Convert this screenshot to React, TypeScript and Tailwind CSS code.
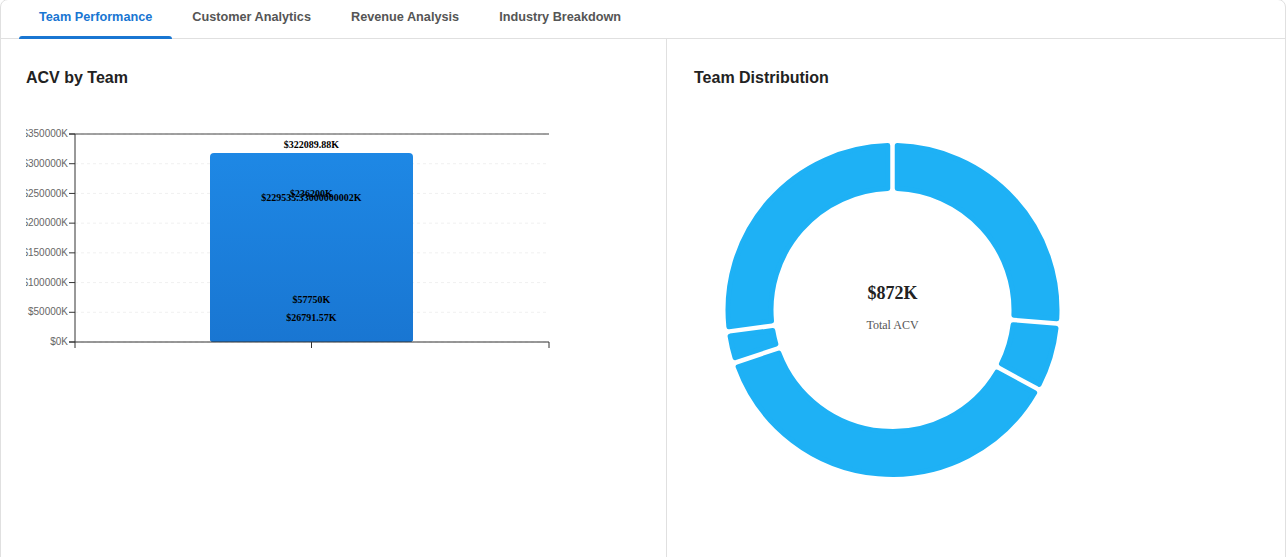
import { useState } from "react";

const teams = [
  { label: "$229535.33000000002K", value: 229535.33 },
  { label: "$57750K", value: 57750 },
  { label: "$322089.88K", value: 322089.88 },
  { label: "$26791.57K", value: 26791.57 },
  { label: "$236200K", value: 236200 },
];

const tabs = ["Team Performance", "Customer Analytics", "Revenue Analysis", "Industry Breakdown"];

// bar chart geometry (svg sits at x=25 inside the left panel)
const X0 = 49;
const X1 = 523;
const Y0 = 24;
const Y1 = 232;
const MAX = 350000;
const yOf = (v: number) => Y1 - (v / MAX) * (Y1 - Y0);
const ticks = [0, 50000, 100000, 150000, 200000, 250000, 300000, 350000];

function BarChart() {
  const sorted = [...teams].sort((a, b) => b.value - a.value);
  return (
    <svg width="560" height="260" className="block overflow-hidden">
      <defs>
        <linearGradient id="barFill" gradientUnits="userSpaceOnUse" x1="0" y1={Y0 + 18} x2="0" y2={Y1}>
          <stop offset="0%" stopColor="#1e88e5" />
          <stop offset="100%" stopColor="#1976d2" />
        </linearGradient>
      </defs>
      {ticks.map((t) => (
        <line key={t} x1={X0} x2={X1} y1={yOf(t)} y2={yOf(t)} stroke="#f0f0f0" strokeDasharray="3 3" />
      ))}
      <line x1={X0} x2={X1} y1={Y0} y2={Y0} stroke="#444" />
      {sorted.map((d, i) => {
        const top = i === 0 ? yOf(d.value) + 2.5 : yOf(d.value);
        return <rect key={d.label} x={184} y={top} width={203} height={Y1 - top} rx={4} fill="url(#barFill)" />;
      })}
      {sorted.map((d, i) => (
        <text
          key={d.label}
          x={285.5}
          y={yOf(d.value) - 5 + (i === 0 ? 2.5 : 0)}
          textAnchor="middle"
          fontFamily="'Liberation Serif', serif"
          fontWeight="bold"
          fontSize="10"
          fill="#000"
        >
          {d.label}
        </text>
      ))}
      {/* y axis */}
      <path d={`M${X0 - 6},${Y0}H${X0}V${Y1}H${X0 - 6}`} fill="none" stroke="#333" />
      {ticks.map((t) => (
        <g key={t}>
          <line x1={X0 - 6} x2={X0} y1={yOf(t)} y2={yOf(t)} stroke="#333" />
          <text
            x={X0 - 7}
            y={yOf(t)}
            dy="0.32em"
            textAnchor="end"
            fontFamily="'Liberation Sans', Arial, sans-serif"
            fontSize="10"
            fill="#666"
          >
            {t === 0 ? "$0K" : `$${t}K`}
          </text>
        </g>
      ))}
      {/* x axis */}
      <path d={`M${X0},${Y1 + 6}V${Y1}H${X1}V${Y1 + 6}`} fill="none" stroke="#333" />
      <line x1={285.5} x2={285.5} y1={Y1} y2={Y1 + 6} stroke="#333" />
    </svg>
  );
}

function arcPath(a0: number, a1: number, r: number, R: number, gap: number) {
  // angles in radians clockwise from 12 o'clock
  const po = gap / 2 / R;
  const pi = gap / 2 / r;
  const pt = (a: number, rad: number) => [rad * Math.sin(a), -rad * Math.cos(a)];
  const [ox0, oy0] = pt(a0 + po, R);
  const [ox1, oy1] = pt(a1 - po, R);
  const [ix1, iy1] = pt(a1 - pi, r);
  const [ix0, iy0] = pt(a0 + pi, r);
  const largeO = a1 - a0 - 2 * po > Math.PI ? 1 : 0;
  const largeI = a1 - a0 - 2 * pi > Math.PI ? 1 : 0;
  return `M${ox0},${oy0}A${R},${R} 0 ${largeO} 1 ${ox1},${oy1}L${ix1},${iy1}A${r},${r} 0 ${largeI} 0 ${ix0},${iy0}Z`;
}

function Donut() {
  const total = teams.reduce((s, d) => s + d.value, 0);
  let acc = 0;
  const corner = 2.5;
  return (
    <svg width="400" height="400" className="block">
      <g transform="translate(200.5,200)">
        {teams.map((d) => {
          const a0 = (acc / total) * Math.PI * 2;
          acc += d.value;
          const a1 = (acc / total) * Math.PI * 2;
          return (
            <path
              key={d.label}
              d={arcPath(a0, a1, 119 + corner, 167 - corner, 4.5 + corner * 2)}
              fill="#1eb1f5"
              stroke="#1eb1f5"
              strokeWidth={corner * 2}
              strokeLinejoin="round"
            />
          );
        })}
        <text
          y="-11"
          textAnchor="middle"
          fontFamily="'Liberation Serif', serif"
          fontWeight="bold"
          fontSize="18"
          fill="#222"
        >
          $872K
        </text>
        <text y="19" textAnchor="middle" fontFamily="'Liberation Serif', serif" fontSize="12" fill="#555">
          Total ACV
        </text>
      </g>
    </svg>
  );
}

export default function App() {
  const [active, setActive] = useState(0);
  return (
    <div className="bg-white w-[1287px] h-[557px] overflow-hidden" style={{ fontFamily: "'Liberation Sans', Arial, sans-serif" }}>
      <div className="w-[1286px] h-[600px] -mt-px border border-[#e0e0e0] rounded-lg flex flex-col">
        <div className="flex pl-[18px] border-b border-[#e0e0e0] h-[39px]">
          {tabs.map((t, i) => (
            <button
              key={t}
              onClick={() => setActive(i)}
              className={`px-5 pb-[2px] h-full text-[12.7px] font-semibold relative ${
                i === active ? "text-[#1976d2]" : "text-[#555]"
              }`}
            >
              {t}
              {i === active && <span className="absolute left-0 right-0 bottom-[-1px] h-[3px] bg-[#1976d2] rounded-t-sm" />}
            </button>
          ))}
        </div>
        <div className="flex flex-1">
          <div className="w-[666px] border-r border-[#e0e0e0] pt-[27px] pl-[25px] overflow-hidden">
            <h2 className="text-base font-bold text-[#222] leading-6 pl-px -ml-px">ACV by Team</h2>
            <div className="mt-[20px]">
              <BarChart />
            </div>
          </div>
          <div className="flex-1 pt-[27px] pl-[27px]">
            <h2 className="text-base font-bold text-[#222] leading-6">Team Distribution</h2>
            <div className="mt-[20px] -ml-[2px]">
              <Donut />
            </div>
          </div>
        </div>
      </div>
    </div>
  );
}
